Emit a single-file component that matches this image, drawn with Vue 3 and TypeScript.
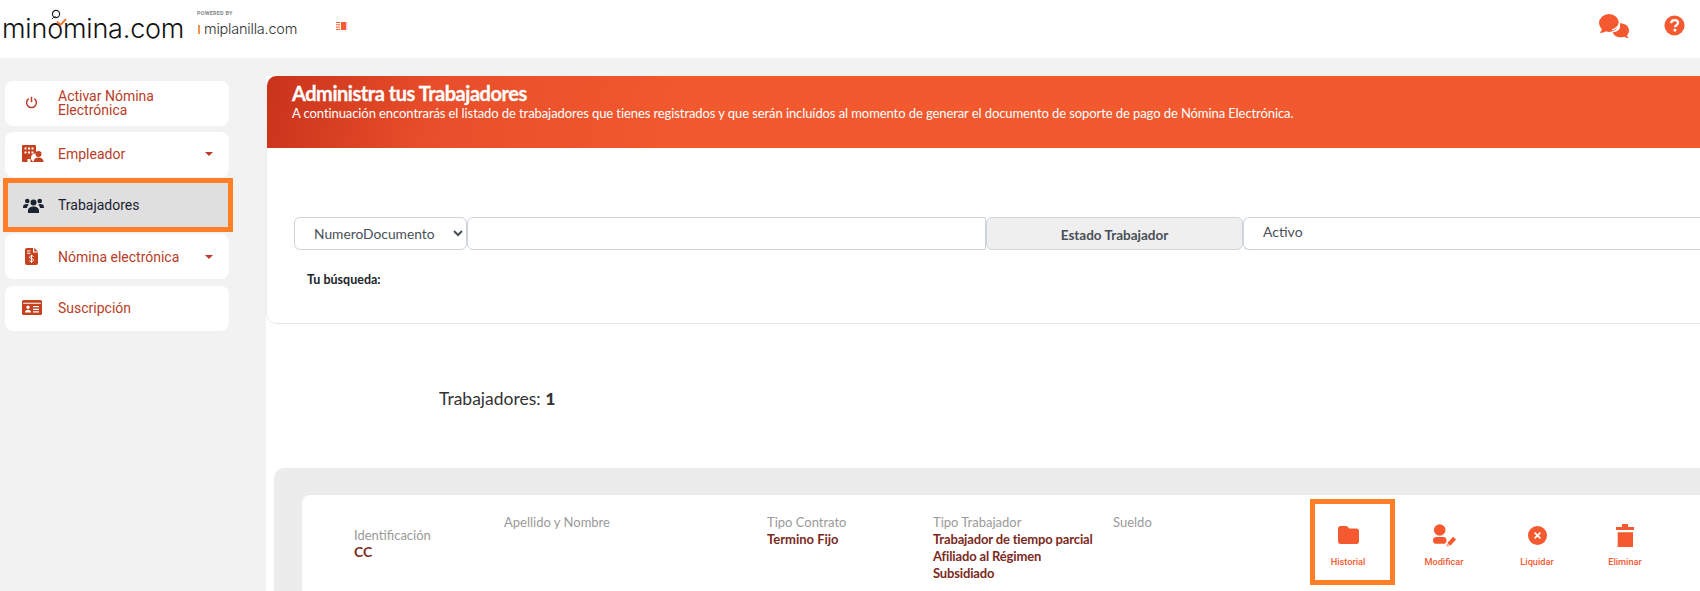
<script setup lang="ts">
interface MenuItem {
  label: string
  icon: string
  caret?: boolean
  active?: boolean
}

const menu: MenuItem[] = [
  { label: 'Activar Nómina Electrónica', icon: 'power' },
  { label: 'Empleador', icon: 'building', caret: true },
  { label: 'Trabajadores', icon: 'users', active: true },
  { label: 'Nómina electrónica', icon: 'invoice', caret: true },
  { label: 'Suscripción', icon: 'card' },
]

const actions = [
  { label: 'Historial', icon: 'folder', width: 94 },
  { label: 'Modificar', icon: 'user-pen', width: 98 },
  { label: 'Liquidar', icon: 'xmark', width: 88 },
  { label: 'Eliminar', icon: 'trash', width: 88 },
]
</script>

<template>
  <div class="page">
    <header class="topbar">
      <div class="logo">
        min<span class="logo-o">o<svg class="logo-mark" viewBox="0 0 22 26" aria-hidden="true">
          <circle cx="9" cy="5" r="3.6" fill="none" stroke="#222" stroke-width="1.2" />
          <path d="M5 10c1-1.500 2-2 4-2" fill="none" stroke="#222" stroke-width="1" />
          <path d="M10 12.500l3.500 3.500 5.500-6" fill="none" stroke="#f47b3a" stroke-width="2" />
        </svg></span>mina.com
      </div>
      <div class="powered">
        <span class="powered-by">POWERED BY</span>
        <span class="powered-name"><i class="powered-bar"></i>miplanilla.com</span>
      </div>
      <svg class="menu-toggle" viewBox="0 0 12 8" aria-hidden="true">
        <path d="M0 .5h4M0 2.800h4M0 5.100h4M0 7.400h4" stroke="#f4592f" stroke-width="1" />
        <rect x="5" y="0" width="5" height="8" fill="#f4592f" />
        <rect x="10" y="0" width="1.400" height="8" fill="#e8c8f0" />
      </svg>
      <div class="top-icons">
        <svg class="chat-icon" viewBox="0 0 32 24" aria-hidden="true">
          <path d="M20.500 9c3 .2 9.500 1.500 9.500 7.500 0 2.200-1 3.800-2 4.900.3 1 1.200 1.900 2 2.600-1.800 0-3.500-.5-4.800-1.300-1.200.4-2.300.6-3.600.6-3.800 0-7-2-8-5 5.500-.2 9-3.700 6.900-9.300z" fill="#f4592f" />
          <ellipse cx="10" cy="9" rx="10" ry="9" fill="#f4592f" />
          <path d="M3 14c0 2-1 3.500-2.500 4.700 2.800.3 5-.5 6.500-1.700z" fill="#f4592f" />
          <path d="M19 3.500c2.200 2.300 2 7-1 9.700-1.400 1.300-3 2.300-5 2.600" fill="none" stroke="#fff" stroke-width="1.400" />
        </svg>
        <svg class="help-icon" viewBox="0 0 22 22" aria-hidden="true">
          <circle cx="11" cy="11" r="10.500" fill="#f4592f" />
          <path d="M7.400 8.400c.2-2 1.800-3.100 3.700-3.100 2.100 0 3.600 1.200 3.600 2.900 0 2.500-3.200 2.500-3.200 4.600" fill="none" stroke="#fff" stroke-width="2.400" />
          <rect x="10.100" y="14.500" width="2.800" height="2.800" rx=".6" fill="#fff" />
        </svg>
      </div>
    </header>

    <div class="body-row">
      <aside class="sidebar">
        <a v-for="item in menu" :key="item.label" class="menu-item" :class="{ active: item.active }">
          <span class="menu-icon">
            <svg v-if="item.icon === 'power'" class="ic-power" viewBox="0 0 14 14">
              <path d="M4 2.800a5.300 5.300 0 1 0 6 0M7 .8v6" fill="none" stroke="currentColor" stroke-width="1.600" />
            </svg>
            <svg v-else-if="item.icon === 'building'" class="ic-building" viewBox="0 0 22 17">
              <path fill-rule="evenodd" d="M1 0h12a1 1 0 0 1 1 1v7.500a4 4 0 0 0-1.500 8.500H8.500v-3h-3v3H1a1 1 0 0 1-1-1V1a1 1 0 0 1 1-1zM2.500 2.500v2h2v-2zM6 2.500v2h2v-2zM9.500 2.500v2h2v-2zM2.500 6.500v2h2v-2zM6 6.500v2h2v-2zM9.500 6.500v2h2v-2z" />
              <circle cx="16.500" cy="9" r="3" />
              <path d="M11.500 17c0-3 2-4.500 5-4.500s5 1.500 5 4.500z" />
            </svg>
            <svg v-else-if="item.icon === 'users'" class="ic-users" viewBox="0 0 21 15">
              <circle cx="4.300" cy="3" r="2.300" />
              <circle cx="16.700" cy="3" r="2.300" />
              <circle cx="10.500" cy="4.500" r="3" />
              <path d="M0 9c0-2 1.500-3 3.500-3 1 0 1.700.2 2.300.7C4.700 7.500 4 8.600 4 10H0zM21 9c0-2-1.500-3-3.500-3-1 0-1.700.2-2.300.7 1.100.8 1.800 1.900 1.800 3.300H21zM5 13c0-3 2.200-4.500 5.500-4.500S16 10 16 13v2H5z" />
            </svg>
            <svg v-else-if="item.icon === 'invoice'" class="ic-invoice" viewBox="0 0 13 17">
              <path fill-rule="evenodd" d="M2 0h6v4.500h5V15a2 2 0 0 1-2 2H2a2 2 0 0 1-2-2V2a2 2 0 0 1 2-2zM9.200 0L13 3.500H9.200zM2 2.500v1h3.500v-1zM2 4.800v1h3.500v-1z" />
              <path d="M8.600 8.600c-.4-.6-1.200-.8-2.100-.8-1 0-1.900.5-1.900 1.400 0 2 4 1 4 3 0 1-1 1.400-2 1.400s-1.800-.3-2.200-1M6.500 6.800v8" fill="none" stroke="#fff" stroke-width="1" />
            </svg>
            <svg v-else class="ic-card" viewBox="0 0 20 15">
              <path fill-rule="evenodd" d="M1.500 0h17A1.500 1.500 0 0 1 20 1.500v12a1.500 1.500 0 0 1-1.500 1.500h-17A1.500 1.500 0 0 1 0 13.500v-12A1.500 1.500 0 0 1 1.500 0zM1.200 2.800v1h17.600v-1zM6 5.500a1.700 1.700 0 1 0 0 3.400 1.700 1.700 0 0 0 0-3.400zM3 12.500h6c0-1.700-1.200-2.700-3-2.700s-3 1-3 2.700zM11 6v1.200h6V6zM11 8.700v1.200h6V8.700zM11 11.300v1.200h6v-1.200z" />
            </svg>
          </span>
          <span class="menu-label">{{ item.label }}</span>
          <span v-if="item.caret" class="caret"></span>
        </a>
      </aside>

      <main class="main">
        <section class="panel">
          <div class="banner">
            <h1>Administra tus Trabajadores</h1>
            <p>A continuación encontrarás el listado de trabajadores que tienes registrados y que serán incluídos al momento de generar el documento de soporte de pago de Nómina Electrónica.</p>
          </div>
          <div class="filters">
            <select class="field-select">
              <option>NumeroDocumento</option>
            </select>
            <input class="field-input" type="text" />
            <div class="field-label">Estado Trabajador</div>
            <div class="field-value">Activo</div>
          </div>
          <div class="search-note">Tu búsqueda:</div>
        </section>

        <div class="count">Trabajadores: <b>1</b></div>

        <section class="list">
          <article class="row">
            <div class="cell cell-id">
              <span class="cell-title">Identificación</span>
              <strong>CC</strong>
            </div>
            <div class="cell cell-name">
              <span class="cell-title">Apellido y Nombre</span>
            </div>
            <div class="cell cell-contract">
              <span class="cell-title">Tipo Contrato</span>
              <strong>Termino Fijo</strong>
            </div>
            <div class="cell cell-type">
              <span class="cell-title">Tipo Trabajador</span>
              <strong class="type-value">Trabajador de tiempo parcial</strong>
              <strong class="type-value">Afiliado al Régimen<br />Subsidiado</strong>
            </div>
            <div class="cell cell-salary">
              <span class="cell-title">Sueldo</span>
            </div>
            <div class="actions">
              <a v-for="a in actions" :key="a.label" class="action" :style="{ width: a.width + 'px' }">
                <span class="action-icon">
                  <svg v-if="a.icon === 'folder'" class="ic-folder" viewBox="0 32 512 448" preserveAspectRatio="none">
                    <path d="M64 480H448c35.300 0 64-28.700 64-64V160c0-35.300-28.700-64-64-64H288c-10.100 0-19.600-4.700-25.600-12.800L243.200 58.900C231.100 42.800 212.100 32 192 32H64C28.700 32 0 60.700 0 96V416c0 35.300 28.700 64 64 64z" />
                  </svg>
                  <svg v-else-if="a.icon === 'user-pen'" class="ic-userpen" viewBox="0 0 23 23">
                    <circle cx="6.700" cy="6" r="5.800" />
                    <rect x="0" y="13" width="13.500" height="6.800" rx="3.400" />
                    <path d="M15.800 20.400l5.800-6.300" stroke="currentColor" stroke-width="4" />
                    <circle cx="14.600" cy="21.400" r="1.300" fill="#f9a58c" />
                  </svg>
                  <svg v-else-if="a.icon === 'xmark'" class="ic-xmark" viewBox="0 0 512 512">
                    <path d="M256 512A256 256 0 1 0 256 0a256 256 0 1 0 0 512zM175 175c9.400-9.400 24.600-9.400 33.900 0l47 47 47-47c9.400-9.400 24.600-9.400 33.900 0s9.400 24.600 0 33.900l-47 47 47 47c9.400 9.400 9.400 24.600 0 33.900s-24.600 9.400-33.900 0l-47-47-47 47c-9.400 9.400-24.600 9.400-33.900 0s-9.400-24.600 0-33.900l47-47-47-47c-9.400-9.400-9.400-24.600 0-33.900z" />
                  </svg>
                  <svg v-else class="ic-trash" viewBox="0 0 18 23">
                    <path d="M6 0h6v3h6v3H0V3h6zM1.700 8.300h15.300V23H1.700z" />
                  </svg>
                </span>
                <span class="action-label">{{ a.label }}</span>
                <i v-if="a.icon === 'folder'" class="mark"></i>
              </a>
            </div>
          </article>
        </section>
      </main>
    </div>
  </div>
</template>

<style>
html,
body {
  margin: 0;
  height: 100%;
  overflow: hidden;
  background: #f2f2f2;
}
</style>

<style scoped>
.page {
  height: 591px;
  overflow: hidden;
  font-family: Lato, "Liberation Sans", sans-serif;
  background: #f2f2f2;
}

.topbar {
  height: 58px;
  background: #fff;
  display: flex;
  align-items: flex-start;
  box-sizing: border-box;
  padding-left: 2px;
}

.logo {
  font-family: Inter, "Liberation Sans", sans-serif;
  font-weight: 300;
  font-size: 27px;
  letter-spacing: -0.2px;
  line-height: 32px;
  color: #111;
  margin-top: 13px;
  width: 195px;
  white-space: nowrap;
}

.logo-o {
  position: relative;
  display: inline-block;
}

.logo-mark {
  position: absolute;
  left: 0;
  top: -4px;
  width: 22px;
  height: 26px;
}

.powered {
  display: flex;
  flex-direction: column;
  width: 139px;
  margin-top: 10px;
}

.powered-by {
  font-family: Roboto, sans-serif;
  font-weight: 700;
  font-size: 5.500px;
  letter-spacing: 0.2px;
  line-height: 7px;
  color: #888;
}

.powered-name {
  font-family: Inter, sans-serif;
  font-weight: 300;
  font-size: 14.500px;
  letter-spacing: -0.22px;
  line-height: 18px;
  color: #333;
  margin-top: 3px;
  display: flex;
  align-items: center;
}

.powered-bar {
  width: 1.500px;
  height: 9px;
  background: #f4924f;
  margin: 1px 4.500px 0 1px;
}

.menu-toggle {
  width: 12px;
  height: 8px;
  margin-top: 22px;
}

.top-icons {
  margin-left: auto;
  display: flex;
  align-items: flex-start;
  padding-right: 15px;
  padding-top: 14px;
}

.chat-icon {
  width: 32px;
  height: 24px;
}

.help-icon {
  width: 21px;
  height: 21px;
  margin-left: 33px;
  margin-top: 1px;
}

.body-row {
  display: flex;
}

.sidebar {
  width: 266px;
  flex: none;
  padding-top: 23px;
  box-sizing: border-box;
}

.menu-item {
  display: flex;
  align-items: center;
  width: 224px;
  height: 45px;
  box-sizing: border-box;
  margin: 0 0 6px 5px;
  padding-right: 16px;
  padding-bottom: 2px;
  background: #fff;
  border-radius: 8px;
  color: #b93c26;
  font-family: Roboto, sans-serif;
  font-weight: 450;
  font-size: 14px;
  line-height: 14px;
}

.menu-item:nth-child(4) {
  margin-bottom: 7px;
  padding-bottom: 0;
}

.menu-item.active {
  width: 220px;
  height: 44px;
  margin: 6px 0 7px 8px;
  padding-bottom: 0;
  background: #dfdfdf;
  border-radius: 0;
  color: #1c2330;
  outline: 5px solid #ff7f27;
}

.menu-icon {
  width: 53px;
  flex: none;
  display: flex;
  justify-content: center;
  box-sizing: border-box;
  color: #c4421f;
}

.active .menu-icon {
  width: 50px;
  color: #1c2330;
}

.menu-icon svg {
  fill: currentColor;
  display: block;
}

.ic-power {
  width: 13px;
  height: 13px;
  color: #c0392b;
}

.ic-building {
  width: 22px;
  height: 17px;
  margin-left: 3px;
}

.ic-users {
  width: 21px;
  height: 15px;
}

.ic-invoice {
  width: 13px;
  height: 17px;
}

.ic-card {
  width: 20px;
  height: 15px;
  margin-left: 1px;
}

.menu-label {
  max-width: 140px;
}

.caret {
  margin-left: auto;
  width: 0;
  height: 0;
  border-left: 4px solid transparent;
  border-right: 4px solid transparent;
  border-top: 4px solid #c0392b;
}

.main {
  flex: 1;
  min-width: 0;
  margin-top: 18px;
  background: #fff;
}

.panel {
  height: 248px;
  box-sizing: border-box;
  border-left: 1px solid #eee;
  border-bottom: 1px solid #e8e8e8;
  border-radius: 10px 0 0 10px;
  overflow: hidden;
}

.banner {
  height: 72px;
  box-sizing: border-box;
  padding: 8px 0 0 25px;
  background: linear-gradient(105deg, #c9331b 0, #e84e2a 12%, #f3592e 30%);
  color: #fff;
}

.banner h1 {
  margin: 0 0 3px;
  font-size: 20px;
  font-weight: 700;
  line-height: 19px;
  letter-spacing: -0.46px;
  -webkit-text-stroke: 0.3px #fff;
}

.banner p {
  margin: 0;
  font-size: 13px;
  letter-spacing: -0.085px;
  line-height: 15px;
}

.filters {
  display: flex;
  height: 33px;
  margin: 69px 0 0 27px;
}

.field-select {
  width: 173px;
  height: 33px;
  flex: none;
  border: 1px solid #ced4da;
  border-radius: 6px;
  background: #fff;
  color: #495057;
  font-family: Lato, sans-serif;
  font-size: 13.800px;
  padding-left: 15px;
}

.field-input {
  width: 519px;
  height: 33px;
  flex: none;
  box-sizing: border-box;
  border: 1px solid #ced4da;
  border-radius: 6px 0 0 6px;
  background: #fff;
}

.field-label {
  width: 257px;
  flex: none;
  box-sizing: border-box;
  border: 1px solid #ced4da;
  border-radius: 6px;
  background: #efefef;
  color: #495057;
  font-weight: 700;
  font-size: 13.500px;
  line-height: 34px;
  text-align: center;
}

.field-value {
  flex: 1;
  box-sizing: border-box;
  border: 1px solid #ced4da;
  border-right: 0;
  border-radius: 6px 0 0 6px;
  padding-left: 19px;
  color: #495057;
  font-size: 14px;
  line-height: 28px;
}

.search-note {
  margin: 22px 0 0 40px;
  font-weight: 700;
  font-size: 12.500px;
  line-height: 16px;
  color: #212529;
}

.count {
  margin: 64px 0 0 173px;
  font-size: 17.500px;
  line-height: 22px;
  color: #333;
}

.count b {
  font-weight: 900;
}

.list {
  margin: 58px 0 0 8px;
  padding: 27px 0 0 28px;
  background: #ececec;
  border-radius: 10px 0 0 0;
  height: 140px;
  box-sizing: border-box;
}

.row {
  display: flex;
  background: #fff;
  border-radius: 8px 0 0 0;
  height: 120px;
  padding: 19px 0 0 52px;
  box-sizing: border-box;
}

.cell {
  display: flex;
  flex-direction: column;
  flex: none;
}

.cell-title {
  font-size: 13px;
  line-height: 17px;
  color: #9a9a9a;
}

.cell strong {
  font-size: 13px;
  line-height: 17px;
  font-weight: 700;
  color: #7b2a22;
}

.cell-id {
  width: 150px;
  padding-top: 13px;
  box-sizing: border-box;
}

.cell-id strong {
  font-size: 14px;
  line-height: 16px;
}

.cell-name {
  width: 263px;
}

.cell-contract {
  width: 166px;
}

.cell-type {
  width: 180px;
}

.type-value {
  white-space: nowrap;
  letter-spacing: -0.15px;
}

.cell-salary {
  width: 188px;
}

.actions {
  display: flex;
  flex: none;
  margin-top: -2px;
}

.action {
  position: relative;
  display: flex;
  flex-direction: column;
  align-items: center;
  flex: none;
  color: #f4592f;
}

.action-icon {
  height: 26px;
  display: flex;
  align-items: center;
  justify-content: center;
  padding-top: 10px;
}

.action-icon svg {
  fill: currentColor;
  display: block;
  color: #f4592f;
}

.ic-folder {
  width: 21px;
  height: 18px;
}

.ic-userpen {
  width: 23px;
  height: 23px;
}

.ic-xmark {
  width: 19px;
  height: 19px;
}

.ic-trash {
  width: 18px;
  height: 23px;
}

.action-label {
  font-family: Roboto, sans-serif;
  font-weight: 500;
  font-size: 9.200px;
  line-height: 12px;
  margin-top: 8px;
}

.mark {
  position: absolute;
  left: 9px;
  top: -13px;
  width: 85px;
  height: 86px;
  box-sizing: border-box;
  border: 5px solid #ff7f27;
}
</style>
